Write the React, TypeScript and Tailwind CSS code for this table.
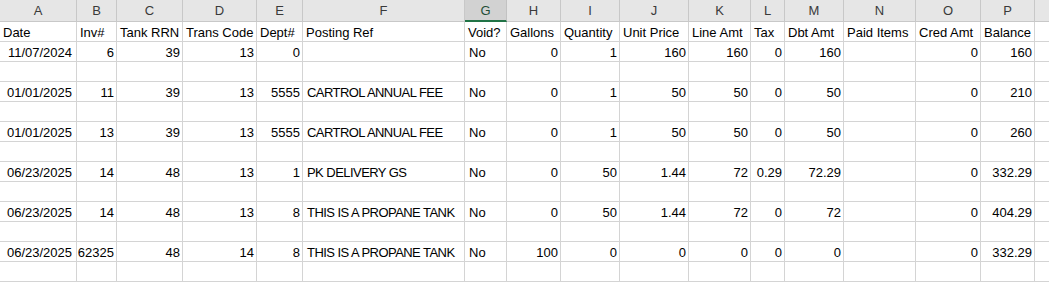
import React from "react";

const cols = ["A","B","C","D","E","F","G","H","I","J","K","L","M","N","O","P"];

const header: string[] = ["Date","Inv#","Tank RRN","Trans Code","Dept#","Posting Ref","Void?","Gallons","Quantity","Unit Price","Line Amt","Tax","Dbt Amt","Paid Items","Cred Amt","Balance"];

const data: string[][] = [
  ["11/07/2024","6","39","13","0","","No","0","1","160","160","0","160","","0","160"],
  ["01/01/2025","11","39","13","5555","CARTROL ANNUAL FEE","No","0","1","50","50","0","50","","0","210"],
  ["01/01/2025","13","39","13","5555","CARTROL ANNUAL FEE","No","0","1","50","50","0","50","","0","260"],
  ["06/23/2025","14","48","13","1","PK DELIVERY GS","No","0","50","1.44","72","0.29","72.29","","0","332.29"],
  ["06/23/2025","14","48","13","8","THIS IS A PROPANE TANK","No","0","50","1.44","72","0","72","","0","404.29"],
  ["06/23/2025","62325","48","14","8","THIS IS A PROPANE TANK","No","100","0","0","0","0","0","","0","332.29"],
];

const leftCols = new Set([5, 6]);

function DataRow({ row }: { row: string[] }) {
  return (
    <>
      {row.map((v, i) => {
        const left = leftCols.has(i);
        return (
          <div
            key={i}
            className={
              "h-[20px] border-r border-b border-[#d4d4d4] overflow-hidden whitespace-nowrap leading-[20px] pt-[1px] " +
              (left ? "pl-[4px] text-left " : i === 0 ? "pr-[4px] text-right " : "pr-[2px] text-right ") +
              (i === 5 ? "tracking-[-0.55px]" : "")
            }
          >
            {v}
          </div>
        );
      })}
      <div className="h-[20px] border-b border-[#d4d4d4]" />
    </>
  );
}

function BlankRow() {
  return (
    <>
      {cols.map((c) => (
        <div key={c} className="h-[20px] border-r border-b border-[#d4d4d4]" />
      ))}
      <div className="h-[20px] border-b border-[#d4d4d4]" />
    </>
  );
}

export default function App() {
  return (
    <div
      className="w-[1049px] h-[282px] bg-white text-black text-[13px] overflow-hidden"
      style={{ fontFamily: '"Liberation Sans", Arial, sans-serif' }}
    >
      <div className="grid grid-cols-[77px_40px_66px_74px_46px_162px_42px_54px_59px_69px_62px_34px_59px_72px_65px_54px_1fr]">
        {cols.map((c) =>
          c === "G" ? (
            <div
              key={c}
              className="h-[22px] bg-[#d2d2d2] border-r border-[#c2c2c2] border-b-2 border-b-[#217346] text-center leading-[20px] pt-[1px] text-[#1f4e36]"
            >
              {c}
            </div>
          ) : (
            <div
              key={c}
              className="h-[22px] bg-[#e6e6e6] border-r border-b border-[#c8c8c8] text-center leading-[20px] pt-[1px] text-[#3a3a3a]"
            >
              {c}
            </div>
          )
        )}
        <div className="h-[22px] bg-[#e6e6e6] border-b border-[#c8c8c8]" />

        {header.map((h, i) => (
          <div
            key={i}
            className="h-[20px] border-r border-b border-[#d4d4d4] overflow-hidden whitespace-nowrap leading-[20px] pt-[1px] pl-[3px]"
          >
            {h}
          </div>
        ))}
        <div className="h-[20px] border-b border-[#d4d4d4]" />

        {data.map((row, i) => (
          <React.Fragment key={i}>
            <DataRow row={row} />
            <BlankRow />
          </React.Fragment>
        ))}
      </div>
    </div>
  );
}
